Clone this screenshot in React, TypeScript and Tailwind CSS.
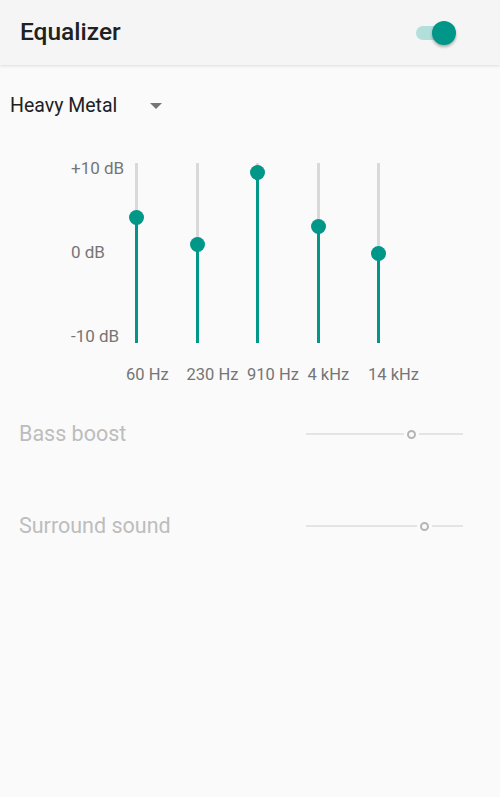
import { useState } from "react";

const bands = [
  { label: "60 Hz", pos: 54 },
  { label: "230 Hz", pos: 81 },
  { label: "910 Hz", pos: 9 },
  { label: "4 kHz", pos: 63 },
  { label: "14 kHz", pos: 90 },
];

const EffectRow = ({ label, thumb }: { label: string; thumb: number }) => (
  <div className="flex items-center h-[28px] pl-[19px] pr-[37px]">
    <span className="text-[21.5px] text-[#bdbdbd] flex-1">{label}</span>
    <div className="relative w-[157px] h-[10px]">
      <div
        className="absolute top-[4px] left-0 h-[2px] bg-[#e4e4e4]"
        style={{ width: thumb - 7 }}
      />
      <div
        className="absolute top-[4px] right-0 h-[2px] bg-[#e4e4e4]"
        style={{ left: thumb + 8 }}
      />
      <div
        className="absolute top-[1px] w-[9px] h-[9px] rounded-full border-2 border-[#b5b5b5] bg-[#fafafa]"
        style={{ left: thumb - 4 }}
      />
    </div>
  </div>
);

export default function App() {
  const [on, setOn] = useState(true);

  return (
    <div className="w-[500px] h-[797px] bg-[#fafafa] font-['Roboto',sans-serif] overflow-hidden">
      {/* toolbar */}
      <div className="h-[65px] bg-[#f5f5f5] shadow-[0_1px_3px_rgba(0,0,0,0.12)] flex items-center pl-[20px] pr-[46px] relative">
        <h1 className="flex-1 text-[24.5px] font-medium text-[#212121] leading-none">Equalizer</h1>
        <button onClick={() => setOn(!on)} className="relative w-[38px] h-[22px] flex items-center">
          <span className="block w-[36px] h-[14px] rounded-full bg-[#b2dfdb]" />
          <span className="absolute right-[-2px] top-[-1px] w-[24px] h-[24px] rounded-full bg-[#009688] shadow-[0_2px_3px_rgba(0,0,0,0.3)]" />
        </button>
      </div>

      {/* preset dropdown */}
      <div className="flex items-center h-[28px] mt-[27px] pl-[10px]">
        <span className="text-[19.5px] text-[#212121] w-[140px]">Heavy Metal</span>
        <span className="w-0 h-0 border-l-[6px] border-r-[6px] border-t-[6px] border-l-transparent border-r-transparent border-t-[#757575]" />
      </div>

      {/* bands */}
      <div className="flex mt-[38px]">
        <div className="flex flex-col justify-between h-[188px] pl-[71px] w-[126px] text-[17px] leading-[20px] text-[#757575]">
          <span>+10 dB</span>
          <span>0 dB</span>
          <span>-10 dB</span>
        </div>
        <div className="flex">
          {bands.map((b) => (
            <div key={b.label} className="w-[60.5px] flex flex-col">
              <div className="relative h-[180px] mt-[5px] w-[21px]">
                <div className="absolute left-[9px] top-0 w-[3px] h-full bg-[#d9d9d9]" />
                <div
                  className="absolute left-[9px] bottom-0 w-[3px] bg-[#009688]"
                  style={{ top: b.pos }}
                />
                <div
                  className="absolute left-[3px] w-[15px] h-[15px] rounded-full bg-[#009688]"
                  style={{ top: b.pos - 7.5 }}
                />
              </div>
              <span className="mt-[22px] text-[16.5px] leading-[20px] text-[#757575] whitespace-nowrap">
                {b.label}
              </span>
            </div>
          ))}
        </div>
      </div>

      {/* effects */}
      <div className="mt-[35px] flex flex-col gap-[64px]">
        <EffectRow label="Bass boost" thumb={105} />
        <EffectRow label="Surround sound" thumb={118} />
      </div>
    </div>
  );
}
